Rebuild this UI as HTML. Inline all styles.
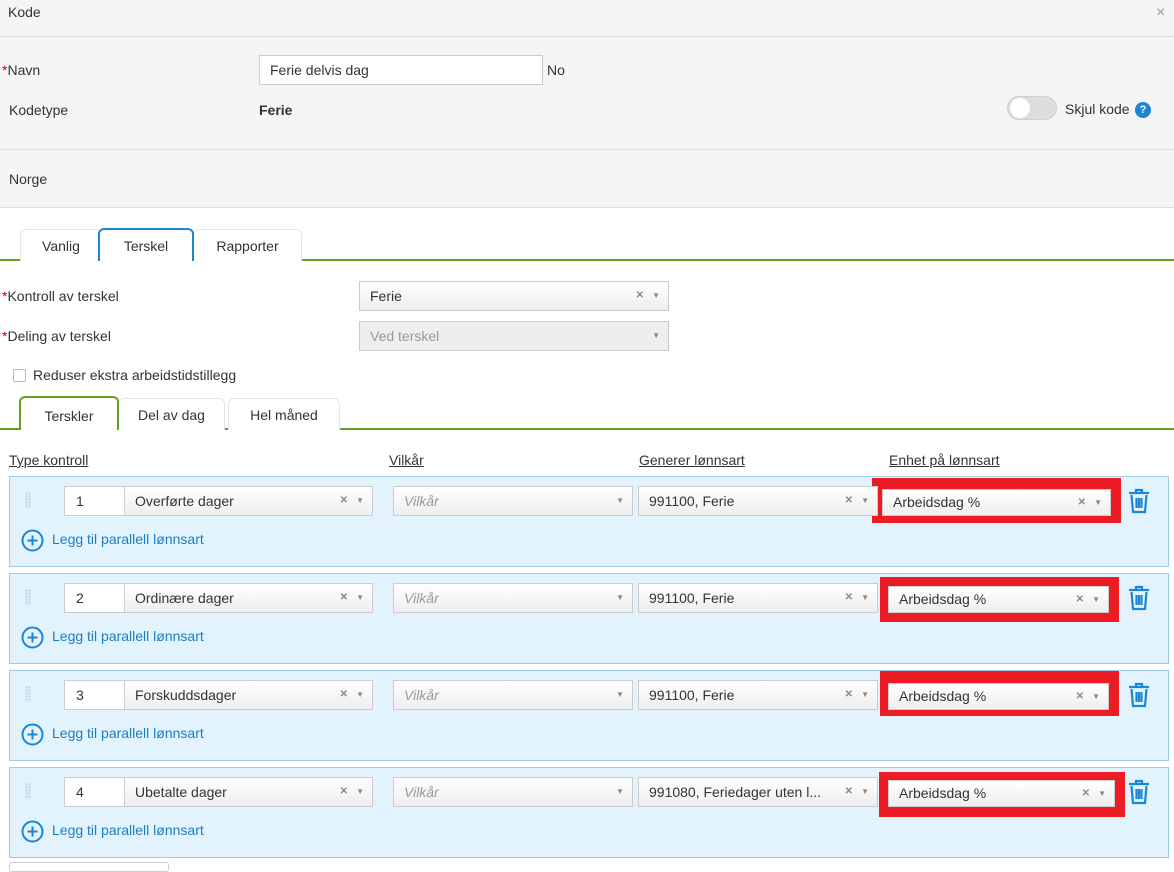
<!DOCTYPE html>
<html><head><meta charset="utf-8"><style>
*{box-sizing:border-box;margin:0;padding:0}
body{width:1174px;height:867px;overflow:hidden;background:#fff;font-family:"Liberation Sans",sans-serif;font-size:14px;color:#333;position:relative}
.a{position:absolute}
.req{color:#c00}
.sel{position:absolute;height:30px;border:1px solid #ccc;background:linear-gradient(#fff,#eee);padding:0 10px;line-height:28px;font-size:14px;color:#333}
.sel .x{position:absolute;right:24px;top:0;color:#888;font-size:10px;font-weight:bold}
.sel .d{position:absolute;right:8px;top:0;color:#888;font-size:8px}
.ph{font-style:italic;color:#999}
.box{position:absolute;left:9px;width:1160px;height:91px;background:#e3f3fd;border:1px solid #9dcbea}
.red{position:absolute;background:#ec1c24}
.tab{position:absolute;height:32px;border:1px solid #e5e5e5;border-bottom:none;border-radius:6px 6px 0 0;text-align:center;line-height:32px;background:#fff}
.u{text-decoration:underline}
.link{color:#1a7ec3}
</style></head><body>
<div class="a" style="left:0;top:0;width:1174px;height:207px;background:#f5f5f5"></div>
<div class="a" style="left:0;top:36px;width:1174px;height:1px;background:#ddd"></div>
<div class="a" style="left:0;top:149px;width:1174px;height:1px;background:#e0e0e0"></div>
<div class="a" style="left:0;top:207px;width:1174px;height:1px;background:#e0e0e0"></div>
<div class="a" style="left:8px;top:4px">Kode</div>
<div class="a" style="left:1156px;top:4px;color:#999;font-size:16px">×</div>
<div class="a" style="left:2px;top:62px"><span class="req">*</span>Navn</div>
<div class="a" style="left:259px;top:55px;width:284px;height:30px;background:#fff;border:1px solid #ccc;padding:0 10px;line-height:28px">Ferie delvis dag</div>
<div class="a" style="left:547px;top:62px">No</div>
<div class="a" style="left:9px;top:102px">Kodetype</div>
<div class="a" style="left:259px;top:102px;font-weight:bold">Ferie</div>
<div class="a" style="left:1007px;top:96px;width:50px;height:24px;border-radius:12px;background:#ddd;border:1px solid #d0d0d0"></div>
<div class="a" style="left:1010px;top:98px;width:20px;height:20px;border-radius:50%;background:#fff"></div>
<div class="a" style="left:1065px;top:101px">Skjul kode</div>
<div class="a" style="left:1135px;top:102px;width:16px;height:16px;border-radius:50%;background:#1a86d6;color:#fff;font-size:11px;font-weight:bold;text-align:center;line-height:16px">?</div>
<div class="a" style="left:9px;top:171px">Norge</div>

<div class="a" style="left:0;top:259px;width:1174px;height:2px;background:#6a9c1e"></div>
<div class="tab" style="left:20px;top:229px;width:82px">Vanlig</div>
<div class="tab" style="left:193px;top:229px;width:109px">Rapporter</div>
<div class="tab" style="left:98px;top:228px;width:96px;height:33px;border:2px solid #1a86d6;border-bottom:none">Terskel</div>

<div class="a" style="left:2px;top:288px"><span class="req">*</span>Kontroll av terskel</div>
<div class="sel" style="left:359px;top:281px;width:310px">Ferie<span class="x">✕</span><span class="d">▼</span></div>
<div class="a" style="left:2px;top:328px"><span class="req">*</span>Deling av terskel</div>
<div class="sel" style="left:359px;top:321px;width:310px;background:#eee;color:#999">Ved terskel<span class="d">▼</span></div>
<div class="a" style="left:13px;top:369px;width:13px;height:13px;border:1px solid #bbb;border-radius:2px;background:#fff"></div>
<div class="a" style="left:33px;top:367px">Reduser ekstra arbeidstidstillegg</div>

<div class="a" style="left:0;top:428px;width:1174px;height:2px;background:#6a9c1e"></div>
<div class="tab" style="left:118px;top:398px;width:107px">Del av dag</div>
<div class="tab" style="left:228px;top:398px;width:112px">Hel måned</div>
<div class="tab" style="left:19px;top:396px;width:100px;height:34px;border:2px solid #6a9c1e;border-bottom:none;line-height:36px">Terskler</div>

<div class="a u" style="left:9px;top:452px">Type kontroll</div>
<div class="a u" style="left:389px;top:452px">Vilkår</div>
<div class="a u" style="left:639px;top:452px">Generer lønnsart</div>
<div class="a u" style="left:889px;top:452px">Enhet på lønnsart</div>

<div class="box" style="top:476px"></div>
<div class="box" style="top:573px"></div>
<div class="box" style="top:670px"></div>
<div class="box" style="top:767px"></div>

<div class="red" style="left:872px;top:478px;width:249px;height:45px"></div>
<div class="red" style="left:880px;top:577px;width:239px;height:45px"></div>
<div class="red" style="left:880px;top:671px;width:239px;height:45px"></div>
<div class="red" style="left:879px;top:772px;width:246px;height:45px"></div>

<div id="rows"></div>
<script>
var d=[[486,"1","Overførte dager","991100, Ferie",882,1111],[583,"2","Ordinære dager","991100, Ferie",888,1109],[680,"3","Forskuddsdager","991100, Ferie",888,1109],[777,"4","Ubetalte dager","991080, Feriedager uten l...",888,1115]];
var h="";
d.forEach(function(r){var t=r[0];
h+='<div class="a" style="left:25px;top:'+(t+6)+'px;width:6px;height:16px;background:radial-gradient(circle,#b6d3e8 1px,transparent 1.2px) 0 0/3px 3px"></div>';
h+='<div class="a" style="left:64px;top:'+t+'px;width:61px;height:30px;background:#fff;border:1px solid #ccc;padding-left:11px;line-height:28px">'+r[1]+'</div>';
h+='<div class="sel" style="left:124px;top:'+t+'px;width:249px">'+r[2]+'<span class="x">✕</span><span class="d">▼</span></div>';
h+='<div class="sel" style="left:393px;top:'+t+'px;width:240px"><span class="ph">Vilkår</span><span class="d">▼</span></div>';
h+='<div class="sel" style="left:638px;top:'+t+'px;width:240px">'+r[3]+'<span class="x">✕</span><span class="d">▼</span></div>';
h+='<div class="sel" style="left:'+r[4]+'px;top:'+(t+3)+'px;width:'+(r[5]-r[4])+'px;height:27px;line-height:25px">Arbeidsdag %<span class="x">✕</span><span class="d">▼</span></div>';
h+='<svg class="a" style="left:1127px;top:'+(t+2)+'px" width="24" height="26" viewBox="0 0 24 26" fill="none" stroke="#1a86d6" stroke-width="2.2"><path d="M2 5h20M9 5V2h6v3M4.5 7l1.5 17h12l1.5-17M9.5 10v10M12 10v10M14.5 10v10"/></svg>';
h+='<svg class="a" style="left:21px;top:'+(t+43)+'px" width="23" height="23" viewBox="0 0 23 23" fill="none" stroke="#1a86d6" stroke-width="2"><circle cx="11.5" cy="11.5" r="10"/><path d="M11.5 6.5v10M6.5 11.5h10"/></svg>';
h+='<div class="a link" style="left:52px;top:'+(t+45)+'px">Legg til parallell lønnsart</div>';
});
document.getElementById("rows").innerHTML=h;
</script>
<div class="a" style="left:9px;top:862px;width:160px;height:10px;border:1px solid #ccc;border-radius:3px;background:#fff"></div>
</body></html>
